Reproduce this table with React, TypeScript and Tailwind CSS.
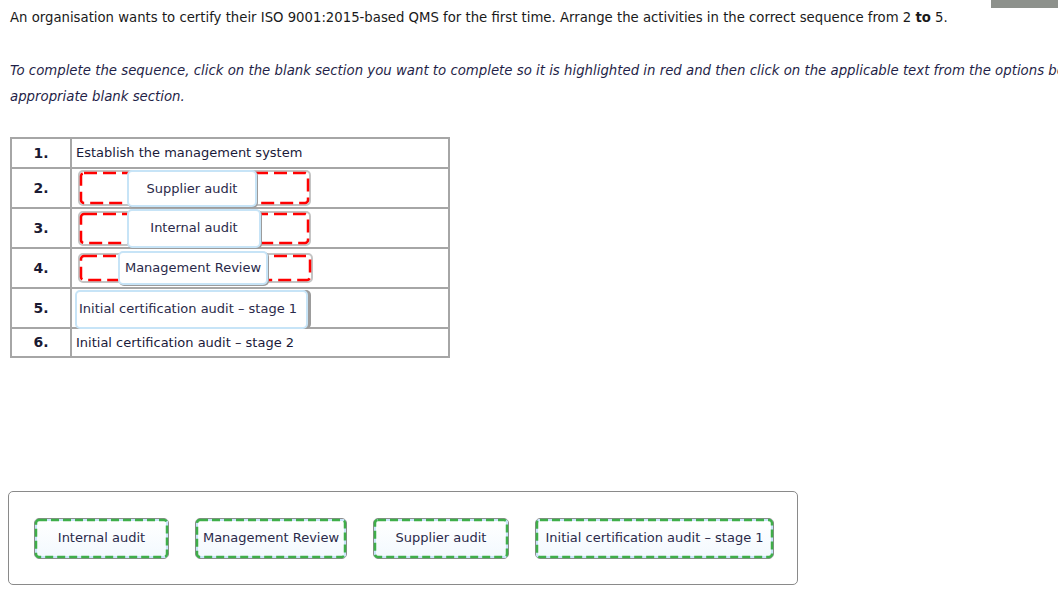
import React from 'react';

const font = { fontFamily: '"DejaVu Sans", Verdana, sans-serif' };

interface SlotRow {
    num: string;
    text: string;
    zoneW: number;
    zoneH: number;
    pillLeft: number;
    pillTop: number;
    pillW: number;
    pillH: number;
}

const slotRows: SlotRow[] = [
    { num: '2.', text: 'Supplier audit', zoneW: 233, zoneH: 36, pillLeft: 49, pillTop: 0, pillW: 130, pillH: 37 },
    { num: '3.', text: 'Internal audit', zoneW: 233, zoneH: 35, pillLeft: 49, pillTop: -2, pillW: 134, pillH: 39 },
    { num: '4.', text: 'Management Review', zoneW: 235, zoneH: 30, pillLeft: 40, pillTop: -2, pillW: 150, pillH: 34 },
];

const options = [
    { text: 'Internal audit', w: 135 },
    { text: 'Management Review', w: 152 },
    { text: 'Supplier audit', w: 136 },
    { text: 'Initial certification audit \u2013 stage 1', w: 239 },
];

// dashed frame drawn over a box
const DashFrame: React.FC<{ color: string; dash: string; width: number }> = ({ color, dash, width }) => (
    <svg className="absolute inset-0 w-full h-full pointer-events-none overflow-visible">
        <rect x="1" y="1" width="calc(100% - 2px)" height="calc(100% - 2px)" rx="3" fill="none" stroke={color} strokeWidth={width} strokeDasharray={dash} />
    </svg>
);

const NumCell: React.FC<{ n: string }> = ({ n }) => (
    <div className="w-[60px] shrink-0 border-r-2 border-[#a6a6a6] flex items-center justify-center font-bold text-[14px] text-[#1a1a33]">
        {n}
    </div>
);

export default function App() {
    return (
        <div className="relative w-[1058px] h-[598px] overflow-hidden bg-white text-[#1a1a1a]" style={font}>
            <div className="absolute top-0 right-0 w-[67px] h-[8px] bg-[#8d918c]" />

            <p className="pl-[10px] pt-[8px] text-[13.25px] leading-[20px] whitespace-nowrap">
                An organisation wants to certify their ISO 9001:2015-based QMS for the first time. Arrange the activities in the correct sequence from 2 <span className="font-semibold">to</span> 5.
            </p>

            <p className="pl-[10px] mt-[30px] text-[13.3px] leading-[26px] italic text-[#1f1f48] whitespace-nowrap">
                To complete the sequence, click on the blank section you want to complete so it is highlighted in red and then click on the applicable text from the options below to move it to the
                <br />
                appropriate blank section.
            </p>

            <div className="ml-[10px] mt-[27px] w-[440px] border-2 border-[#a6a6a6] text-[13px] text-[#1a1a3a]">
                <div className="flex h-[28px]">
                    <NumCell n="1." />
                    <div className="flex items-center pl-[4px]">Establish the management system</div>
                </div>

                {slotRows.map((r) => (
                    <div key={r.num} className="flex h-[40px] border-t-2 border-[#a6a6a6]">
                        <NumCell n={r.num} />
                        <div className="flex items-center pl-[6px]">
                            <div className="relative rounded-[5px] border-2 border-[#c4c4c4]" style={{ width: r.zoneW, height: r.zoneH }}>
                                <DashFrame color="#ff0000" dash="13 6" width={2.5} />
                                <div
                                    className="absolute flex items-center justify-center rounded-[5px] border-2 border-[#c7e4f7] bg-white shadow-[1px_1px_0_#9c9c9c] text-[#2a2a4a]"
                                    style={{ left: r.pillLeft - 2, top: r.pillTop - 2, width: r.pillW, height: r.pillH }}
                                >
                                    {r.text}
                                </div>
                            </div>
                        </div>
                    </div>
                ))}

                <div className="flex h-[40px] border-t-2 border-[#a6a6a6]">
                    <NumCell n="5." />
                    <div className="flex items-center pl-[3px]">
                        <div className="relative z-10 mt-[2px] flex items-center w-[233px] h-[39px] pl-[2px] rounded-[5px] border-2 border-[#c7e4f7] bg-white shadow-[3px_0_0_#9c9c9c] text-[#2a2a4a]">
                            Initial certification audit &ndash; stage 1
                        </div>
                    </div>
                </div>

                <div className="flex h-[29px] border-t-2 border-[#a6a6a6]">
                    <NumCell n="6." />
                    <div className="flex items-center pl-[4px]">Initial certification audit &ndash; stage 2</div>
                </div>
            </div>

            <div className="ml-[8px] mt-[133px] w-[790px] h-[94px] rounded-[5px] border border-[#8a8a8a] flex items-center gap-[26px] pl-[25px]">
                {options.map((o) => (
                    <div
                        key={o.text}
                        className="relative h-[41px] rounded-[5px] border border-[#8c8c8c] bg-white"
                        style={{ width: o.w }}
                    >
                        <div className="h-full flex items-center justify-center rounded-[4px] border-2 border-[#c8e6fa] bg-gradient-to-b from-white to-[#f3f9fe] text-[13px] text-[#2a2a4a] whitespace-nowrap">
                            {o.text}
                        </div>
                        <DashFrame color="#3fae49" dash="8 4" width={2.5} />
                    </div>
                ))}
            </div>
        </div>
    );
}
